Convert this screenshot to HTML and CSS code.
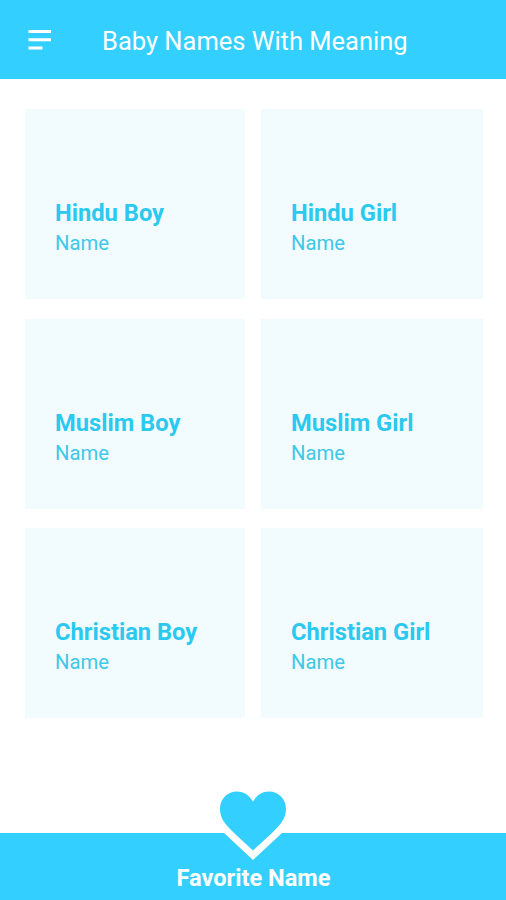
FILE: index.html
```html
<!DOCTYPE html>
<html lang="en">
<head>
<meta charset="UTF-8">
<meta name="viewport" content="width=device-width, initial-scale=1.0">
<title>Baby Names With Meaning</title>
<link rel="stylesheet" href="styles.css">
</head>
<body>
    <header class="toolbar">
        <svg class="menu-icon" viewBox="0 0 24 22">
            <path d="M.5 1h22.5v3H.5zM.5 9.3h22.5v3H.5zM.5 17.5h14v3H.5z" fill="#fff"/>
        </svg>
        <h1>Baby Names With Meaning</h1>
    </header>

    <main class="grid">
        <div class="card"><h2>Hindu Boy</h2><p>Name</p></div>
        <div class="card"><h2>Hindu Girl</h2><p>Name</p></div>
        <div class="card"><h2>Muslim Boy</h2><p>Name</p></div>
        <div class="card"><h2>Muslim Girl</h2><p>Name</p></div>
        <div class="card"><h2>Christian Boy</h2><p>Name</p></div>
        <div class="card"><h2>Christian Girl</h2><p>Name</p></div>
    </main>

    <footer class="favorite">
        <svg class="heart" viewBox="0 0 82 78">
            <path d="M41 76L12 49V34H70V49Z" fill="#fff"/>
            <path d="M41 66.500L22 49C14 41 8 35 8 25C8 14 16 7.500 25 7.500C32 7.500 37 11 41 17.500C45 11 50 7.500 57 7.500C66 7.500 74 14 74 25C74 35 68 41 60 49Z" fill="#33d0ff"/>
        </svg>
        <span>Favorite Name</span>
    </footer>
</body>
</html>
```
FILE: styles.css
```css
body {
    font-family: Roboto, sans-serif;
    background-color: #fff;
    margin: 0;
    height: 900px;
    display: flex;
    flex-direction: column;
}
.toolbar {
    background-color: #33d0ff;
    height: 79px;
    display: flex;
    align-items: center;
    color: #fff;
    padding: 0 28px;
}
.menu-icon {
    width: 24px;
    height: 22px;
}
.toolbar h1 {
    font-size: 25.5px;
    font-weight: 400;
    line-height: 30px;
    margin: 3px 0 0 50px;
    white-space: nowrap;
}
.grid {
    display: grid;
    grid-template-columns: 220px 222px;
    grid-auto-rows: 190px;
    gap: 19.6px 16px;
    padding: 30px 0 0 25px;
}
.card {
    background-color: #f2fcfe;
    box-sizing: border-box;
    padding: 90px 0 0 30px;
    color: #2bc8f0;
}
.card h2 {
    font-size: 23.7px;
    font-weight: 700;
    line-height: 28px;
    margin: 0;
}
.card p {
    font-size: 20.3px;
    line-height: 24px;
    margin: 4px 0 0;
    color: #40c8e8;
}
.favorite {
    position: relative;
    background-color: #33d0ff;
    height: 67px;
    margin-top: auto;
    display: flex;
    justify-content: center;
    color: #fff;
    font-size: 23.6px;
    font-weight: 700;
}
.favorite span {
    margin: 32px 0 0 1px;
    line-height: 27px;
}
.heart {
    position: absolute;
    left: 212px;
    top: -49px;
    width: 82px;
    height: 78px;
}
```
